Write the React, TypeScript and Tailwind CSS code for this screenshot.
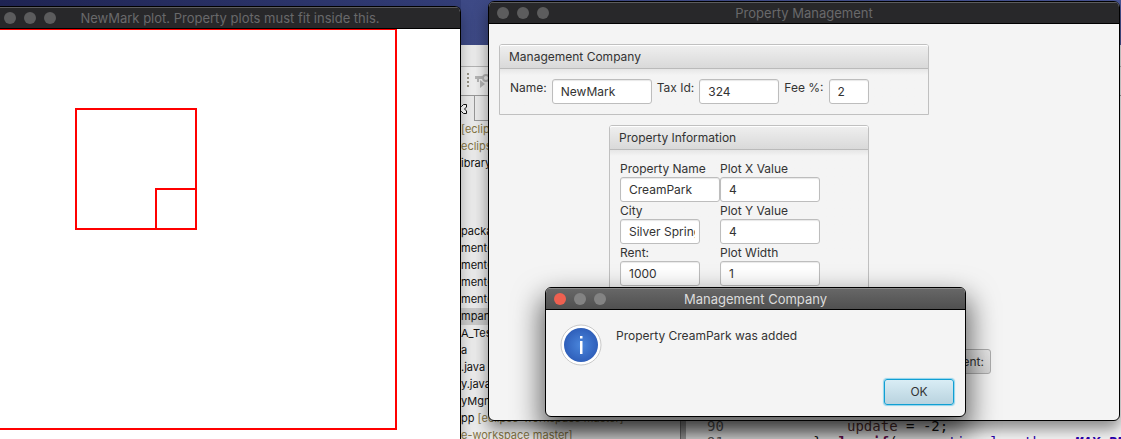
import type { ReactNode } from 'react';

type Tone = 'inactive' | 'active';

function TitleBar({ title, tone = 'inactive', lights = 'left-2' }: { title: string; tone?: Tone; lights?: string }) {
  const active = tone === 'active';
  return (
    <header
      className={
        active
          ? 'relative flex h-[22px] shrink-0 items-center justify-center border-b border-black bg-linear-to-b from-[#686868] to-[#505050] text-[#dcdcdc] shadow-[inset_0_1px_0_#8a8a8a]'
          : 'relative flex h-[22px] shrink-0 items-center justify-center border-b border-black bg-[#28282a] text-[#69696b] shadow-[inset_0_1px_0_#5c5c5e]'
      }
    >
      <div className={`absolute flex gap-2 ${lights}`}>
        <span className={active ? 'size-3 rounded-full bg-[#ee6050]' : 'size-3 rounded-full bg-[#5c5c5d]'} />
        <span className={active ? 'size-3 rounded-full bg-[#838383]' : 'size-3 rounded-full bg-[#5c5c5d]'} />
        <span className={active ? 'size-3 rounded-full bg-[#838383]' : 'size-3 rounded-full bg-[#5c5c5d]'} />
      </div>
      <h2 className="text-[13px] leading-4">{title}</h2>
    </header>
  );
}

function TitledPane({ title, className, children }: { title: string; className: string; children: ReactNode }) {
  return (
    <section className={`rounded-t-[3px] border border-[#c0c0c0] ${className}`}>
      <h3 className="flex h-6 items-center rounded-t-[2px] border-b border-[#bababa] bg-linear-to-b from-[#efefef] to-[#d9d9d9] px-[9px] shadow-[inset_0_1px_0_#fff]">
        {title}
      </h3>
      <div className="bg-linear-to-b from-[#e6e6e6] to-[#f4f4f4] to-[6px] p-[10px]">{children}</div>
    </section>
  );
}

function TextBox({ id, value, className }: { id: string; value: string; className: string }) {
  return (
    <input
      id={id}
      defaultValue={value}
      className={`h-[25px] rounded-[3px] border border-[#bdbdbd] bg-white pr-1 pl-2 shadow-[inset_0_1px_1px_#e8e8e8] outline-none ${className}`}
    />
  );
}

const companyFields = [
  { id: 'company-name', label: 'Name:', value: 'NewMark', width: 'w-[100px]' },
  { id: 'tax-id', label: 'Tax Id:', value: '324', width: 'w-20' },
  { id: 'fee', label: 'Fee %:', value: '2', width: 'w-10' },
];

const propertyFields = [
  { id: 'property-name', label: 'Property Name', value: 'CreamPark', width: 'w-[100px]' },
  { id: 'plot-x', label: 'Plot X Value', value: '4', width: 'w-[100px]' },
  { id: 'city', label: 'City', value: 'Silver Spring', width: 'w-20' },
  { id: 'plot-y', label: 'Plot Y Value', value: '4', width: 'w-[100px]' },
  { id: 'rent', label: 'Rent:', value: '1000', width: 'w-20' },
  { id: 'plot-width', label: 'Plot Width', value: '1', width: 'w-[100px]' },
];

const treeRows = [
  { text: '', note: '[eclipse' },
  { text: '', note: 'eclipse-' },
  { text: 'ibrary' },
  { text: '' },
  { text: '' },
  { text: '' },
  { text: 'package' },
  { text: 'mentCo' },
  { text: 'mentCo' },
  { text: 'mentCo' },
  { text: 'mentCo' },
  { text: 'mpany', selected: true },
  { text: 'A_Test' },
  { text: 'a' },
  { text: '.java' },
  { text: 'y.java' },
  { text: 'yMgm' },
  { text: 'pp ', note: '[eclipse-workspace master]' },
  { text: '', note: 'e-workspace master]' },
];

function Workbench() {
  return (
    <div className="flex h-full flex-col pl-[461px]">
      <div className="h-[45px] shrink-0 bg-linear-to-r from-[#3d4985] to-[#4a5798]" />
      <div className="h-[22px] shrink-0 border-b border-[#b4b4b4] bg-[#ececec]" />
      <div className="flex h-[29px] shrink-0 items-center gap-1 border-b border-[#999] bg-[#f0f0f0] pl-[6px]">
        <svg width="3" height="18" viewBox="0 0 3 18" fill="#9a9588">
          <path d="M0 1h2v2H0zM0 5h2v2H0zM0 9h2v2H0zM0 13h2v2H0z" />
        </svg>
        <svg width="18" height="18" viewBox="0 0 18 18" fill="#b5b5b5">
          <path d="M1 4h8v3H1zM3 7h2v3H3zM6 8v8l5-4z" />
          <circle cx="12" cy="6" r="3" fill="none" stroke="#b5b5b5" strokeWidth="2" />
        </svg>
      </div>
      <div className="flex min-h-0 grow">
        <div className="w-[220px] shrink-0 overflow-hidden border-r border-[#777] bg-[#ececec] text-[#111]">
          <div className="flex h-[25px]">
            <div className="flex w-[14px] items-center border-r border-[#999]">
              <svg width="7" height="12" viewBox="0 0 7 12" fill="#fff" stroke="#111">
                <path d="M-1 3.500H0.500L2.500 1.500H5.500V4L3.500 6L5.500 8V10.500H2.500L0.500 8.500H-1" />
              </svg>
            </div>
            <div className="grow border-b border-[#999]" />
          </div>
          <div className="text-[11px] leading-[17px]">
            {treeRows.map((row, i) => (
              <div
                key={i}
                className={row.selected ? 'h-[17px] bg-[#cbcbcb] whitespace-pre' : 'h-[17px] whitespace-pre'}
              >
                {row.text}
                <span className="text-[#857544]">{row.note}</span>
              </div>
            ))}
          </div>
        </div>
        <div className="flex min-w-0 grow flex-col justify-end overflow-hidden border-l-[5px] border-[#aaa] bg-[#f6f6f6]">
          <div className="-mb-[11px] flex gap-[81px] pl-[21px] font-['DejaVu_Sans_Mono',monospace] text-[14px] leading-4 text-[#111]">
            <pre className="font-[inherit] text-[#606060]">{'90\n91'}</pre>
            <pre className="font-[inherit]">
              {'     '}
              <span className="text-[#5a3434]">update</span>
              {' = -2;\n'}
              {' } '}
              <span className="font-bold text-[#6d0f52]">else if</span>
              {'('}
              <span className="text-[#2a00b0]">properties</span>.<span className="text-[#2a00b0]">length</span>
              {' == '}
              <span className="font-bold text-[#2a00b0] italic">MAX_PROPERTY</span>
            </pre>
          </div>
        </div>
      </div>
    </div>
  );
}

function PlotWindow() {
  return (
    <div className="absolute top-[6px] -bottom-5 left-0 flex w-[461px] flex-col overflow-hidden rounded-tr-[6px] border-t border-r border-black bg-white shadow-[0_8px_14px_rgba(0,0,0,0.3)]">
      <TitleBar title="NewMark plot. Property plots must fit inside this." lights="left-1" />
      <svg className="block shrink-0" width="400" height="402" viewBox="0 0 400 402" fill="none" stroke="#ff0000" strokeWidth="2">
        <path d="M-4 0H396V400H-4" />
        <rect x="76" y="80" width="120" height="120" />
        <rect x="156" y="160" width="40" height="40" />
      </svg>
    </div>
  );
}

function PropertyWindow() {
  return (
    <main className="absolute top-px right-px bottom-[18px] left-[488px] flex flex-col overflow-hidden rounded-[6px] border border-black bg-[#f4f4f4] shadow-[0_8px_16px_rgba(0,0,0,0.45)]">
      <TitleBar title="Property Management" />
      <div className="relative grow pt-5 pl-[10px] leading-[17px]">
        <TitledPane title="Management Company" className="w-[430px]">
          <div className="flex h-[25px] items-start gap-[5px]">
            {companyFields.map((f) => (
              <div key={f.id} className="flex gap-[5px]">
                <label htmlFor={f.id}>{f.label}</label>
                <TextBox id={f.id} value={f.value} className={f.width} />
              </div>
            ))}
          </div>
        </TitledPane>
        <TitledPane title="Property Information" className="mt-[10px] ml-[110px] w-[260px]">
          <div className="grid grid-cols-[100px_100px]">
            {propertyFields.map((f) => (
              <div key={f.id} className="flex flex-col">
                <label htmlFor={f.id}>{f.label}</label>
                <TextBox id={f.id} value={f.value} className={f.width} />
              </div>
            ))}
          </div>
        </TitledPane>
        <button className="absolute right-32 bottom-[46px] h-[25px] rounded-[3px] border border-[#adadad] bg-linear-to-b from-[#e8e8e8] to-[#d6d6d6] px-[6px]">
          Max Rent:
        </button>
      </div>
    </main>
  );
}

function MessageDialog() {
  return (
    <div
      role="dialog"
      aria-label="Management Company"
      className="absolute top-[287px] left-[545px] flex h-[130px] w-[421px] flex-col overflow-hidden rounded-[6px] border border-black bg-[#f4f4f4] shadow-[0_14px_28px_4px_rgba(0,0,0,0.6)]"
    >
      <TitleBar title="Management Company" tone="active" />
      <div className="flex grow items-start gap-[14px] pt-[14px] pl-[14px]">
        <svg width="42" height="42" viewBox="0 0 42 42">
          <defs>
            <radialGradient id="info">
              <stop offset="0" stopColor="#4a86dc" />
              <stop offset="1" stopColor="#2f5fba" />
            </radialGradient>
          </defs>
          <circle cx="21" cy="21" r="20" fill="#fff" stroke="#c8c8c8" />
          <circle cx="21" cy="21" r="17" fill="url(#info)" />
          <path d="M20 12h2.500v2.500H20zM20 17h2.500v13H20z" fill="#fff" />
        </svg>
        <p className="pt-[3px] leading-[17px]">Property CreamPark was added</p>
      </div>
      <div className="flex justify-end pr-[11px] pb-[11px]">
        <button className="h-[26px] w-[70px] rounded-[3px] border border-[#109fd3] bg-linear-to-b from-[#d9edf5] to-[#b9d3df] shadow-[0_0_1px_1px_#8fd3ec]">
          OK
        </button>
      </div>
    </div>
  );
}

export default function App() {
  return (
    <div className="relative h-screen overflow-hidden bg-[#2b376d] font-[Inter,sans-serif] text-[12px] text-[#333]">
      <div className="absolute top-0 left-0 h-2 w-[461px] bg-linear-to-r from-[#1f2453] to-[#333e78]" />
      <Workbench />
      <PlotWindow />
      <PropertyWindow />
      <MessageDialog />
    </div>
  );
}
